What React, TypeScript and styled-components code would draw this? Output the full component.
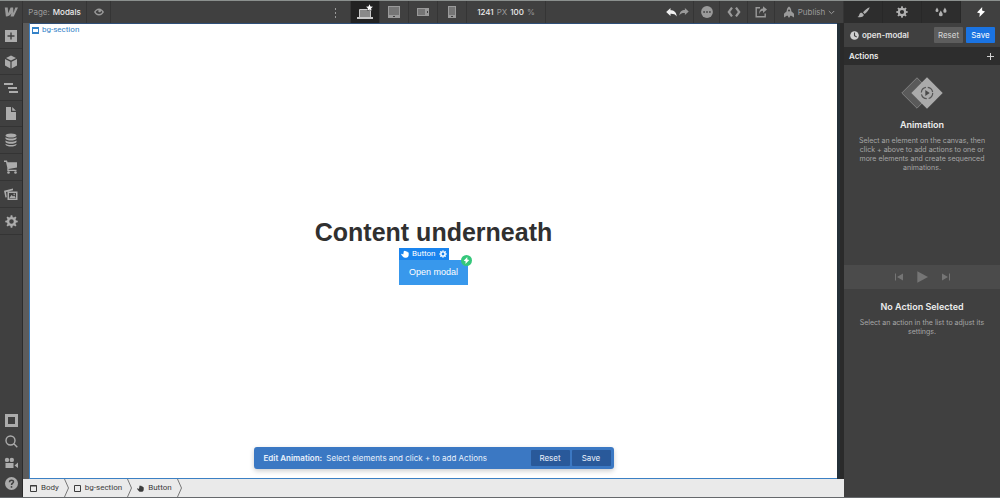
import React from "react";
import styled, { createGlobalStyle, css } from "styled-components";

const GlobalStyle = createGlobalStyle`
  *, *::before, *::after { box-sizing: border-box; }
  html, body { margin: 0; padding: 0; }
  body { background: #404040; font-family: Inter, "Liberation Sans", sans-serif; font-size: 8px; line-height: 10px; }
  button { font: inherit; color: inherit; border: 0; padding: 0; margin: 0; background: none; cursor: pointer; }
  h1, h2, p, ul, ol { margin: 0; padding: 0; }
  svg { display: block; flex: none; }
`;

/* ---------- icons ---------- */

type IconProps = { w?: number; h?: number; box?: string; children: React.ReactNode };

const Icon = ({ w = 14, h = 14, box = "0 0 14 14", children }: IconProps) => (
  <svg width={w} height={h} viewBox={box} fill="currentColor" aria-hidden="true">
    {children}
  </svg>
);

const teeth = [0, 45, 90, 135, 180, 225, 270, 315];

const GearIcon = ({ size = 14 }: { size?: number }) => (
  <Icon w={size} h={size}>
    <circle cx="7" cy="7" r="3.700" fill="none" stroke="currentColor" strokeWidth="2.500" />
    {teeth.map((a) => (
      <path key={a} d="M5.700 2.800 6.100.300h1.800l.4 2.500z" transform={`rotate(${a} 7 7)`} />
    ))}
  </Icon>
);

const BoltIcon = ({ size = 10 }: { size?: number }) => (
  <Icon w={size} h={size} box="0 0 10 10">
    <path d="M6.200 0 1 5.400l2.800.8L3.400 10 9 4.400l-2.900-.8z" />
  </Icon>
);

const HandIcon = ({ size = 8 }: { size?: number }) => (
  <Icon w={size} h={size} box="0 0 10 10">
    <path d="M3.500 1.500C4.200.500 5 .700 5.200 1.500c.8-.6 1.500-.2 1.600.6.8-.4 1.400 0 1.500.8.8-.2 1.300.2 1.300 1v2.500c0 2-1.400 3.400-3.300 3.400H5.200C4 9.800 3.200 9.400 2.500 8.500L.4 6c-.4-.7.3-1.500 1.100-1.100l1.300.7z" />
  </Icon>
);

const LogoIcon = () => (
  <Icon w={14} h={10} box="0 0 14 10">
    <path d="M14 0.500 9.700 9.500H6.500l1-3.600C6.300 8.100 4.700 9.300 1.900 9.500L0.800 0.500h2.900l.5 5.700L6.600.5h2.500l.4 5.600L11.300.5z" />
  </Icon>
);

const EyeIcon = () => (
  <Icon w={10} h={8} box="0 0 10 8">
    <path fillRule="evenodd" d="M5 .400C7.300.400 9 2.200 10 4 9 5.800 7.300 7.600 5 7.600S1 5.800 0 4C1 2.200 2.700.400 5 .400zM4.600 2C3 2.100 2.200 3 1.700 4 2.300 5 3.400 6 5 6S7.700 5 8.300 4L7 2.500C7.200 3.600 6.400 4.500 5.300 4.300 4.300 4.100 4 3 4.600 2z" />
  </Icon>
);

const DotsIcon = () => (
  <Icon w={3} h={11} box="0 0 3 11">
    <rect x="1" y="1" width="1" height="2" />
    <rect x="1" y="5" width="1" height="2" />
    <rect x="1" y="9" width="1" height="2" />
  </Icon>
);

const DesktopIcon = () => (
  <Icon w={18} h={16} box="0 0 18 16">
    <path d="M3.500 5.500h11v8h-11z" fill="#8a8a8a" stroke="currentColor" />
    <path d="M1 13h16v2H1z" />
    <path
      d="m13.500.300 1 2.200 2.500.2-1.900 1.600.5 2.300-2.100-1.200-2.100 1.200.5-2.300L10 2.700l2.500-.2z"
      fill="#fff"
      stroke="#222"
      strokeWidth=".8"
      paintOrder="stroke"
    />
  </Icon>
);

const TabletIcon = () => (
  <Icon w={12} h={12} box="0 0 12 12">
    <path fillRule="evenodd" d="M0 0h12v12H0zM1 1v8h10V1zM5 10v1h2v-1z" />
    <path d="M1 1h10v8H1z" opacity=".6" />
  </Icon>
);

const LandscapeIcon = () => (
  <Icon w={12} h={8} box="0 0 12 8">
    <path fillRule="evenodd" d="M0 0h12v8H0zM1 1v6h7V1zM10 3v2h1V3z" />
    <path d="M1 1h7v6H1z" opacity=".6" />
  </Icon>
);

const PhoneIcon = () => (
  <Icon w={8} h={12} box="0 0 8 12">
    <path fillRule="evenodd" d="M0 0h8v12H0zM1 1v8h6V1zM3 10v1h2v-1z" />
    <path d="M1 1h6v8H1z" opacity=".6" />
  </Icon>
);

const UndoIcon = () => (
  <Icon w={11} h={9} box="0 0 11 9">
    <path d="M4.500 0v2.300C8 2.300 10.300 4 10.800 8.500 9.300 6.200 7.500 5.600 4.500 5.700V8L.2 4z" />
  </Icon>
);

const RedoIcon = () => (
  <Icon w={10} h={8} box="0 0 11 9">
    <path d="M6.500 0v2.300C3 2.300.7 4 .2 8.500 1.700 6.200 3.500 5.600 6.500 5.700V8l4.300-4z" />
  </Icon>
);

const StatusIcon = () => (
  <Icon w={12} h={12} box="0 0 12 12">
    <circle cx="6" cy="6" r="5.900" />
    <path d="M2.300 5.200h1.600v1.600H2.300zM5.200 5.200h1.600v1.600H5.200zM8.100 5.200h1.600v1.600H8.100z" fill="#3c3c3c" />
  </Icon>
);

const CodeIcon = () => (
  <Icon w={14} h={10} box="0 0 14 10">
    <path d="M5 .600 1.800 5 5 9.400M9 .600 12.200 5 9 9.400" fill="none" stroke="currentColor" strokeWidth="2.200" />
  </Icon>
);

const ExportIcon = () => (
  <Icon w={12} h={12} box="0 0 12 12">
    <path d="M5 1.800H1.200v9h9V7.500" fill="none" stroke="currentColor" strokeWidth="1.400" />
    <path d="M8 .300 12 3.600 8 6.900V4.800C6 4.800 5 5.600 4.400 8 3.800 4.500 5.500 2.500 8 2.400z" />
  </Icon>
);

const RocketIcon = () => (
  <Icon w={12} h={12} box="0 0 12 12">
    <path d="M6 .500c1.800 1.200 2.400 3 2.300 4.800L11 7.800v3.700L8.300 9.800H7.200L6.500 11.500h-1L4.800 9.800H3.700L1 11.500V7.800l2.700-2.500C3.600 3.500 4.200 1.700 6 .500z" />
    <circle cx="6" cy="4.500" r="1" fill="#404040" />
  </Icon>
);

const ChevronIcon = () => (
  <Icon w={7} h={5} box="0 0 7 5">
    <path d="M.8 1 3.500 3.700 6.200 1" fill="none" stroke="currentColor" />
  </Icon>
);

const AddIcon = () => (
  <Icon w={12} h={12} box="0 0 12 12">
    <path fillRule="evenodd" d="M0 0h12v12H0zM5.300 2.500v2.800H2.500v1.400h2.800v2.800h1.400V6.700h2.800V5.300H6.700V2.500z" />
  </Icon>
);

const CubeIcon = () => (
  <Icon w={14} h={14}>
    <path d="M7 .600 12 3 7 5.600 2 3zM1 4l5.400 2.800v6.600L1 10.600zM13 4 7.600 6.800v6.600L13 10.600z" />
  </Icon>
);

const NavigatorIcon = () => (
  <Icon w={14} h={10} box="0 0 14 10">
    <path d="M0 0h9v2H0zM4 4h9v2H4zM5 8h9v2H5z" />
  </Icon>
);

const PageIcon = () => (
  <Icon w={10} h={13} box="0 0 10 13">
    <path d="M0 0h5v5h5v8H0zM6.200 0 10 3.800H6.200z" />
  </Icon>
);

const DatabaseIcon = () => (
  <Icon w={12} h={14} box="0 0 12 14">
    <ellipse cx="6" cy="2.500" rx="5.500" ry="2.100" />
    <path d="M.5 4.200C2.500 6 9.500 6 11.500 4.200v1.600C10.500 8.200 1.500 8.200.5 5.800zM.5 7.500c2 1.800 9 1.800 11 0v1.500c-1 2.400-10 2.400-11 0zM.5 10.700c2 1.800 9 1.800 11 0v.8c-1 2.700-10 2.700-11 0z" />
  </Icon>
);

const CartIcon = () => (
  <Icon w={14} h={14}>
    <path d="M0 .500h3l.6 1.700H13v5.300L4.600 9v.700H12.500V11H3.300V7.800L2 2H0z" />
    <circle cx="4.500" cy="12.500" r="1.300" />
    <circle cx="11.500" cy="12.500" r="1.300" />
  </Icon>
);

const AssetsIcon = () => (
  <Icon w={14} h={13} box="0 0 14 13">
    <path d="M0 2.800 9 .600v1.700L2 4l.8 5.200-1.400.3zM3.500 3.500h10V12h-10zM5 5v5.500h7V5z" fillRule="evenodd" />
    <path d="M5.300 10 7.600 7l1.400 1.600L10.200 7.500 11.800 10z" />
    <circle cx="10.200" cy="6.200" r=".8" />
  </Icon>
);

const FrameIcon = () => (
  <Icon w={13} h={13} box="0 0 13 13">
    <path fillRule="evenodd" d="M0 0h13v13H0zM3 3v7h7V3z" />
  </Icon>
);

const SearchIcon = () => (
  <Icon w={13} h={13} box="0 0 13 13">
    <path d="M9.100 9.100 12.300 12.300M10 5.500a4.500 4.500 0 1 1-9 0 4.500 4.500 0 0 1 9 0z" fill="none" stroke="currentColor" strokeWidth="1.400" />
  </Icon>
);

const VideoIcon = () => (
  <Icon w={14} h={12} box="0 0 14 12">
    <circle cx="3" cy="2.900" r="2.200" />
    <circle cx="7.800" cy="2.900" r="2.200" />
    <path d="M1.500 6h8v5h-8zM10.500 8.500 14 5.500v5.500z" />
  </Icon>
);

const HelpIcon = () => (
  <Icon w={13} h={13} box="0 0 13 13">
    <circle cx="6.500" cy="6.500" r="6.500" />
    <path d="M4.500 5.200C4.500 2.400 8.600 2.700 8.500 5 8.400 6.200 6.600 6.300 6.500 8" fill="none" stroke="#404040" strokeWidth="1.500" />
    <circle cx="6.500" cy="9.900" r=".9" fill="#404040" />
  </Icon>
);

const BrushIcon = () => (
  <Icon w={13} h={11} box="0 0 13 11">
    <path d="M12.700.300C12.300 2.500 9.600 5.700 7.600 7L6 5.200C7.800 3.200 10.500.900 12.700.300zM5.200 6 6.800 7.800C6.800 9.700 4.500 10.800.4 10 2 9.500 2 8.300 2.500 7 3.100 5.800 4.400 5.500 5.200 6z" />
  </Icon>
);

const DropsIcon = () => (
  <Icon w={12} h={10} box="0 0 12 10">
    <path d="M2 .500C2.800 1.800 3.500 2.700 3.500 3.600a1.500 1.500 0 0 1-3 0C.5 2.700 1.200 1.800 2 .500zM5.800 3.500c1 1.700 1.900 2.700 1.900 3.900a1.900 1.900 0 0 1-3.800 0c0-1.200.9-2.200 1.900-3.900zM9.900.500c1 1.700 1.600 2.500 1.600 3.700a1.600 1.600 0 0 1-3.200 0c0-1.200.7-2 1.600-3.700z" />
  </Icon>
);

const ClockIcon = () => (
  <Icon w={9} h={9} box="0 0 9 9">
    <circle cx="4.500" cy="4.500" r="4.300" />
    <path d="M4.500 1.500v3.200l2.200 1.200" fill="none" stroke="#404040" strokeWidth="1.100" />
  </Icon>
);

const PlusIcon = () => (
  <Icon w={7} h={7} box="0 0 7 7">
    <path d="M3 0h1v3h3v1H4v3H3V4H0V3h3z" />
  </Icon>
);

const AnimationArt = () => (
  <Icon w={42} h={32} box="0 0 42 32">
    <path d="M16 .800 31 16 16 31.200.800 16z" fill="#5a5a5a" stroke="#808080" />
    <path d="M26 .300 41.700 16 26 31.700 10.300 16z" fill="#ababab" />
    <circle cx="26" cy="16" r="5.700" fill="none" stroke="#555" strokeWidth="1.200" strokeDasharray="7 2" />
    <path d="M24.300 13v6l4.400-3z" fill="#4a4a4a" />
  </Icon>
);

const SkipIcon = ({ forward }: { forward?: boolean }) => (
  <Icon w={9} h={8} box="0 0 9 8">
    <path d={forward ? "M0 .500 6 4 0 7.500zM7 .500h1v7H7z" : "M9 .500 3 4l6 3.500zM1 .500h1v7H1z"} />
  </Icon>
);

const PlayIcon = () => (
  <Icon w={11} h={12} box="0 0 11 12">
    <path d="M.3.300 11 6 .3 11.700z" />
  </Icon>
);

const SectionIcon = () => (
  <Icon w={7} h={7} box="0 0 7 7">
    <path d="M0 0h7v2H0zM0 5h7v2H0zM0 2h1v3H0zM6 2h1v3H6z" />
  </Icon>
);

const BodyIcon = () => (
  <Icon w={7} h={7} box="0 0 7 7">
    <path d="M.5.500h6v6h-6zM0 1h7" fill="none" stroke="currentColor" />
  </Icon>
);

const BoxIcon = () => (
  <Icon w={7} h={7} box="0 0 7 7">
    <path d="M.5.500h6v6h-6z" fill="none" stroke="currentColor" />
  </Icon>
);

const CrumbDivider = () => (
  <Icon w={5} h={18} box="0 0 5 18">
    <path d="M.5 0 4.500 9 .5 18" fill="none" stroke="#777" />
  </Icon>
);

/* ---------- layout ---------- */

const Shell = styled.div`
  display: grid;
  grid-template-columns: minmax(0, 1fr) 156px;
  min-height: 100vh;
  border-top: 1px solid #8b908e;
  border-bottom: 1px solid #66696c;
  color: #d0d0d0;
`;

const Workspace = styled.div`
  display: flex;
  flex-direction: column;
`;

const TopBar = styled.header`
  display: grid;
  grid-template-columns: 23px 1fr auto 1fr;
  height: 22px;
  background: #404040;
  color: #9a9a9a;
`;

const BarGroup = styled.div<{ $end?: boolean }>`
  display: flex;
  justify-content: ${(p) => (p.$end ? "flex-end" : "flex-start")};
`;

const barCell = css<{ $width: number; $active?: boolean }>`
  display: flex;
  align-items: center;
  justify-content: center;
  gap: 3px;
  width: ${(p) => p.$width}px;
  white-space: nowrap;
  border-right: 1px solid #353535;
  background: ${(p) => (p.$active ? "#222" : "transparent")};
  color: ${(p) => (p.$active ? "#c8c8c8" : "inherit")};
`;

const BarButton = styled.button<{ $width: number; $active?: boolean }>`
  ${barCell}
`;

const BarReadout = styled.div<{ $width: number; $active?: boolean }>`
  ${barCell}
`;

const History = styled.div<{ $width: number; $active?: boolean }>`
  ${barCell}
  gap: 2px;
  padding-left: 3px;

  button:first-child { color: #f0f0f0; }
`;

const Strong = styled.strong`
  color: #ececec;
  font-weight: 500;
`;

const Main = styled.div`
  display: flex;
  flex: 1;
`;

const Rail = styled.nav`
  display: flex;
  flex-direction: column;
  width: 23px;
  padding-bottom: 3px;
  background: #404040;
  border-right: 1px solid #2c2c2c;
  color: #acacac;
`;

const RailGroup = styled.div<{ $row: number; $lined?: boolean; $bottom?: boolean }>`
  display: grid;
  grid-auto-rows: ${(p) => p.$row}px;
  margin-top: ${(p) => (p.$bottom ? "auto" : "0")};

  button {
    display: grid;
    place-items: center;
    border-bottom: ${(p) => (p.$lined ? "1px solid #343434" : "0")};
  }
`;

const Stage = styled.div`
  display: flex;
  flex: 1;
  flex-direction: column;
`;

const Viewport = styled.div`
  display: flex;
  flex: 1;
  padding-left: 6px;
  background: #5c5c5c;
`;

const Canvas = styled.main`
  position: relative;
  display: flex;
  flex: 1;
  flex-direction: column;
  align-items: center;
  justify-content: center;
  gap: 13px;
  background: #fff;
  border: solid #3b80c4;
  border-width: 1px 0 1px 1px;
  border-top-color: #2f4f78;
`;

const ScrollTrack = styled.div`
  width: 7px;
  background: linear-gradient(90deg, #24313a 3px, #2a2a2a 3px);
`;

const SectionTag = styled.div`
  position: absolute;
  top: 1px;
  left: 2px;
  display: flex;
  align-items: center;
  gap: 3px;
  color: #3382c8;
  font-family: Roboto, sans-serif;
`;

const Heading = styled.h1`
  color: #303030;
  font: bold 25px/30px "Liberation Sans", Arial, sans-serif;
`;

const Selected = styled.div`
  position: relative;
`;

const ModalButton = styled.button`
  display: block;
  height: 25px;
  padding: 0 10px;
  background: #3898ec;
  color: #fff;
  font: 9px/25px "Liberation Sans", Arial, sans-serif;
`;

const SelectedTag = styled.div`
  position: absolute;
  bottom: 100%;
  left: 0;
  display: flex;
  align-items: center;
  gap: 3px;
  height: 12px;
  padding: 0 2px;
  background: #1a84ee;
  color: #fff;
  font-family: Roboto, sans-serif;
`;

const TriggerBadge = styled.span`
  position: absolute;
  top: -5px;
  right: -4px;
  display: grid;
  place-items: center;
  width: 11px;
  height: 11px;
  border-radius: 50%;
  background: #35c77b;
  color: #fff;
`;

const Toast = styled.div`
  position: absolute;
  bottom: 9px;
  left: 50%;
  display: flex;
  align-items: center;
  gap: 2px;
  width: 360px;
  height: 22px;
  padding: 0 3px 0 10px;
  transform: translateX(-50%);
  border-radius: 3px;
  background: #3b78c3;
  box-shadow: 0 2px 5px rgba(0, 0, 0, 0.2);
  color: #e9f1fb;
  white-space: nowrap;

  p { flex: 1; }
  b { margin-right: 2px; font-weight: 600; }
`;

const ToastButton = styled.button`
  width: 39px;
  height: 16px;
  border-radius: 1px;
  background: #29599a;
`;

const Crumbs = styled.ol`
  display: flex;
  height: 18px;
  padding-left: 7px;
  background: #eaeaea;
  color: #3c3c3c;
  font-family: Roboto, sans-serif;
  list-style: none;
`;

const Crumb = styled.li`
  display: flex;
  align-items: center;
  gap: 5px;
  margin-right: 5px;

  button {
    display: flex;
    align-items: center;
    gap: 4px;
  }
`;

const Panel = styled.aside`
  display: flex;
  flex-direction: column;
  background: #404040;
`;

const Tabs = styled.div`
  display: grid;
  grid-template-columns: repeat(4, 1fr);
  height: 22px;
`;

const Tab = styled.button<{ $active?: boolean }>`
  display: grid;
  place-items: center;
  background: ${(p) => (p.$active ? "#404040" : "#2d2d2d")};
  color: ${(p) => (p.$active ? "#fff" : "#b0b0b0")};
  border-right: 1px solid #282828;

  &:last-child { border-right: 0; }
`;

const PanelHead = styled.div`
  display: flex;
  align-items: center;
  gap: 3px;
  height: 24px;
  padding: 0 5px 0 6px;

  strong { flex: 1; color: #e4e4e4; font-weight: 600; }
`;

const PanelButton = styled.button<{ $primary?: boolean }>`
  width: 29px;
  height: 16px;
  border-radius: 1px;
  background: ${(p) => (p.$primary ? "#1a73e2" : "#5d5d5d")};
  color: ${(p) => (p.$primary ? "#fff" : "#d8d8d8")};
`;

const ActionsHead = styled.div`
  display: flex;
  align-items: center;
  justify-content: space-between;
  height: 18px;
  padding: 0 6px 0 5px;
  background: #2d2d2d;

  h2 { color: #ececec; font-size: 8px; line-height: 10px; font-weight: 600; }
`;

const Notice = styled.section<{ $tall?: boolean }>`
  display: flex;
  flex-direction: column;
  align-items: center;
  min-height: ${(p) => (p.$tall ? 200 : 60)}px;
  padding: 12px 12px 0;
  color: #a6a6a6;
  text-align: center;

  svg { margin-bottom: 10px; }
  h2 { margin-bottom: 5px; color: #ececec; font-size: 9px; line-height: 12px; font-weight: 600; }
  p { font-size: 7px; line-height: 9px; }
`;

const Player = styled.div`
  display: flex;
  align-items: center;
  justify-content: center;
  gap: 14px;
  height: 24px;
  background: #4b4b4b;
  color: #757575;
`;

const tools = [
  { label: "Add elements", icon: <AddIcon /> },
  { label: "Symbols", icon: <CubeIcon /> },
  { label: "Navigator", icon: <NavigatorIcon /> },
  { label: "Pages", icon: <PageIcon /> },
];

const managers = [
  { label: "CMS", icon: <DatabaseIcon /> },
  { label: "Ecommerce", icon: <CartIcon /> },
  { label: "Assets", icon: <AssetsIcon /> },
  { label: "Settings", icon: <GearIcon size={13} /> },
];

const helpers = [
  { label: "Show borders", icon: <FrameIcon /> },
  { label: "Find anything", icon: <SearchIcon /> },
  { label: "Video tutorials", icon: <VideoIcon /> },
  { label: "Help", icon: <HelpIcon /> },
];

const breakpoints = [
  { label: "Desktop", icon: <DesktopIcon />, active: true },
  { label: "Tablet", icon: <TabletIcon /> },
  { label: "Mobile landscape", icon: <LandscapeIcon /> },
  { label: "Mobile portrait", icon: <PhoneIcon /> },
];

const crumbs = [
  { label: "Body", icon: <BodyIcon /> },
  { label: "bg-section", icon: <BoxIcon /> },
  { label: "Button", icon: <HandIcon size={7} /> },
];

const renderTools = (items: { label: string; icon: React.ReactNode }[]) =>
  items.map((t) => (
    <button key={t.label} aria-label={t.label}>
      {t.icon}
    </button>
  ));

export default function App() {
  return (
    <>
      <GlobalStyle />
      <Shell>
        <Workspace>
          <TopBar>
            <BarButton $width={23} aria-label="Menu"><LogoIcon /></BarButton>
            <BarGroup>
              <BarButton $width={64}>
                <span>Page:</span>
                <Strong>Modals</Strong>
              </BarButton>
              <BarButton $width={24} aria-label="Preview"><EyeIcon /></BarButton>
            </BarGroup>
            <BarGroup>
              <BarButton $width={30} aria-label="More breakpoints"><DotsIcon /></BarButton>
              {breakpoints.map((b) => (
                <BarButton key={b.label} $width={29} $active={b.active} aria-label={b.label}>
                  {b.icon}
                </BarButton>
              ))}
              <BarReadout $width={79}>
                <Strong>1241</Strong>
                <span>PX</span>
                <Strong>100</Strong>
                <span>%</span>
              </BarReadout>
            </BarGroup>
            <BarGroup $end>
              <History $width={36}>
                <button aria-label="Undo"><UndoIcon /></button>
                <button aria-label="Redo"><RedoIcon /></button>
              </History>
              <BarButton $width={26} aria-label="Status"><StatusIcon /></BarButton>
              <BarButton $width={28} aria-label="Code"><CodeIcon /></BarButton>
              <BarButton $width={27} aria-label="Export"><ExportIcon /></BarButton>
              <BarButton $width={69}>
                <RocketIcon />
                <span>Publish</span>
                <ChevronIcon />
              </BarButton>
            </BarGroup>
          </TopBar>
          <Main>
            <Rail>
              <RailGroup $row={26} $lined>{renderTools(tools)}</RailGroup>
              <RailGroup $row={27} $lined>{renderTools(managers)}</RailGroup>
              <RailGroup $row={21} $bottom>{renderTools(helpers)}</RailGroup>
            </Rail>
            <Stage>
              <Viewport>
                <Canvas>
                  <SectionTag>
                    <SectionIcon />
                    bg-section
                  </SectionTag>
                  <Heading>Content underneath</Heading>
                  <Selected>
                    <SelectedTag>
                      <HandIcon />
                      Button
                      <GearIcon size={8} />
                    </SelectedTag>
                    <ModalButton>Open modal</ModalButton>
                    <TriggerBadge><BoltIcon size={7} /></TriggerBadge>
                  </Selected>
                  <Toast>
                    <p>
                      <b>Edit Animation:</b> Select elements and click + to add Actions
                    </p>
                    <ToastButton>Reset</ToastButton>
                    <ToastButton>Save</ToastButton>
                  </Toast>
                </Canvas>
                <ScrollTrack />
              </Viewport>
              <Crumbs>
                {crumbs.map((c) => (
                  <Crumb key={c.label}>
                    <button>
                      {c.icon}
                      {c.label}
                    </button>
                    <CrumbDivider />
                  </Crumb>
                ))}
              </Crumbs>
            </Stage>
          </Main>
        </Workspace>
        <Panel>
          <Tabs>
            <Tab aria-label="Style"><BrushIcon /></Tab>
            <Tab aria-label="Settings"><GearIcon size={12} /></Tab>
            <Tab aria-label="Effects"><DropsIcon /></Tab>
            <Tab $active aria-label="Interactions"><BoltIcon /></Tab>
          </Tabs>
          <PanelHead>
            <ClockIcon />
            <strong>open-modal</strong>
            <PanelButton>Reset</PanelButton>
            <PanelButton $primary>Save</PanelButton>
          </PanelHead>
          <ActionsHead>
            <h2>Actions</h2>
            <button aria-label="Add action"><PlusIcon /></button>
          </ActionsHead>
          <Notice $tall>
            <AnimationArt />
            <h2>Animation</h2>
            <p>
              Select an element on the canvas, then click + above to add actions to one or more elements and
              create sequenced animations.
            </p>
          </Notice>
          <Player>
            <button aria-label="Previous"><SkipIcon /></button>
            <button aria-label="Play"><PlayIcon /></button>
            <button aria-label="Next"><SkipIcon forward /></button>
          </Player>
          <Notice>
            <h2>No Action Selected</h2>
            <p>Select an action in the list to adjust its settings.</p>
          </Notice>
        </Panel>
      </Shell>
    </>
  );
}
